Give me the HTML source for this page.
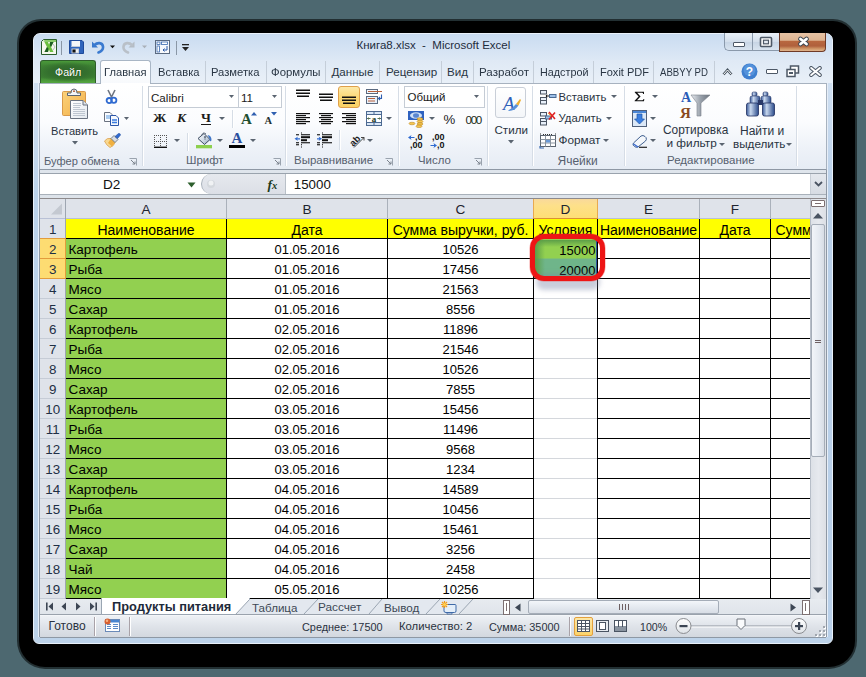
<!DOCTYPE html>
<html><head><meta charset="utf-8"><style>
*{margin:0;padding:0;box-sizing:border-box}
html,body{width:866px;height:677px;overflow:hidden;background:#4d6870;font-family:"Liberation Sans",sans-serif}
body>div,#w div{position:absolute}
.t{white-space:nowrap;line-height:1}
</style></head><body>
<div style="left:19px;top:21px;width:836px;height:646px;background:#000;border-radius:22px 22px 26px 26px;box-shadow:0 0 0 2px rgba(0,0,0,.55)"></div><div style="left:33px;top:33px;width:800px;height:611px;background:linear-gradient(#dfe9f5,#d5e2f1 40%,#c9dbef);border-radius:7px 7px 6px 6px;border:1px solid #e9f1fa"></div><div style="left:34px;top:83px;width:5px;height:557px;background:linear-gradient(#cfdff1,#bcd3ea 20%,#bcd3ea);border-right:1px solid #e6eef8"></div><div style="left:827px;top:83px;width:5px;height:557px;background:linear-gradient(#cfdff1,#b9d0e9 20%,#b9d0e9);border-left:1px solid #e6eef8"></div><div style="left:34px;top:637px;width:798px;height:6px;background:#bdd3ea;border-radius:0 0 5px 5px"></div><div style="left:34px;top:34px;width:798px;height:26px;background:linear-gradient(#c9dbf0,#d3e2f3 50%,#dde8f5);border-radius:6px 6px 0 0"></div><svg style="position:absolute;left:41px;top:39px" width="16" height="16" viewBox="0 0 16 16">
<path d="M2.5 0.5 H15.5 V15.5 H0.5 V2.5Z" fill="#f6f8ee" stroke="#2a5e2a"/>
<path d="M2 2 L4 1 H15 V3 H4Z" fill="#6fbf4a" opacity=".8"/>
<path d="M3.5 3 H7 L8 5.5 L9 3 H12.5 L10 8 L12.5 13 H9 L8 10.5 L7 13 H3.5 L6 8Z" fill="#6cc03e"/>
<path d="M3.5 13 L6 8 L7.5 9.5 L7 13Z M9 3 H12.5 L10 8 L9 6.5Z" fill="#1e5e22"/>
<path d="M12 5 L14 8 L12 11" stroke="#b8c0c0" stroke-width="1" fill="none"/>
</svg><div style="left:61px;top:41px;width:1px;height:14px;background:#8a97a6"></div><svg style="position:absolute;left:69px;top:40px" width="15" height="14" viewBox="0 0 15 14">
<path d="M0.5 0.5 H13 L14.5 2 V13.5 H0.5Z" fill="#2f64bc" stroke="#1f4a9a"/>
<rect x="2.5" y="1" width="8.5" height="6" fill="#f4f6f9"/><rect x="2.5" y="6" width="8.5" height="1" fill="#c0cad8"/>
<rect x="2.5" y="8.5" width="7.5" height="5" fill="#c9ced6"/>
<rect x="3.5" y="9.5" width="3" height="3" fill="#111"/><rect x="7" y="9.5" width="2" height="3" fill="#f0f2f4"/>
</svg><svg style="position:absolute;left:90px;top:40px" width="28" height="14" viewBox="0 0 28 14">
<path d="M2 1.5 L2 7.5 L8 7.5Z" fill="#3a78cc"/>
<path d="M4.5 5 C7 2.5 12.5 2 13 6.5 C13.4 9.5 11 11.5 8.5 12.5" fill="none" stroke="#3a7ad0" stroke-width="2.6" stroke-linecap="round"/>
<path d="M20 5.5 H25 L22.5 8.2Z" fill="#111"/>
</svg><svg style="position:absolute;left:122px;top:40px" width="28" height="14" viewBox="0 0 28 14">
<path d="M12.5 1.5 L12.5 7.5 L6.5 7.5Z" fill="#b4bcc4"/>
<path d="M10 5 C7.5 2.5 2 2 1.5 6.5 C1.1 9.5 3.5 11.5 6 12.5" fill="none" stroke="#b9c0c8" stroke-width="2.6" stroke-linecap="round"/>
<path d="M20 5.5 H25 L22.5 8.2Z" fill="#a9b0b8"/>
</svg><svg style="position:absolute;left:155px;top:40px" width="15" height="14" viewBox="0 0 15 14">
<rect x="0.5" y="0.5" width="14" height="13" fill="#f7f9fc" stroke="#5a6a80"/>
<rect x="2" y="2" width="3" height="2.5" fill="#fff" stroke="#3a6ab0" stroke-width="0.8"/><rect x="6.5" y="2" width="6" height="2.5" fill="#fff" stroke="#3a6ab0" stroke-width="0.8"/>
<rect x="2" y="6" width="2.5" height="6" fill="#fff" stroke="#3a6ab0" stroke-width="0.8"/>
<path d="M12 6 V10 H8 M9.5 8.5 L8 10 L9.5 11.5" stroke="#2a5aa8" stroke-width="1" fill="none"/></svg><div style="left:176px;top:41px;width:1px;height:14px;background:#8a97a6"></div><svg style="position:absolute;left:181px;top:44px" width="9" height="8" viewBox="0 0 9 8">
<rect x="1" y="0" width="7" height="1.3" fill="#222"/><path d="M1 3 L8 3 L4.5 7Z" fill="#222"/></svg><div class="t" style="left:356.5px;top:39.97px;font-size:11.5px;color:#1e2c3c;font-weight:normal;">Книга8.xlsx&nbsp; - &nbsp;Microsoft Excel</div><div style="left:724px;top:33px;width:28px;height:18px;background:linear-gradient(#eaf1f9,#d4dfec 50%,#c6d4e4 51%,#d9e4f0);border:1px solid #8a99ab;border-top:none;border-right:none;border-radius:0 0 0 5px"></div><div style="left:752px;top:33px;width:27px;height:18px;background:linear-gradient(#eaf1f9,#d4dfec 50%,#c6d4e4 51%,#d9e4f0);border:1px solid #8a99ab;border-top:none;border-right:none"></div><div style="left:779px;top:33px;width:47px;height:19px;background:linear-gradient(#e6c2a4,#deb592 40%,#b8673f 47%,#b0603c 72%,#d09868 88%,#dfb48e);border:1px solid #6e3a26;border-top:none;border-radius:0 0 4px 0"></div><div style="left:733px;top:42px;width:12px;height:5px;background:#fff;border:1px solid #4d5866;border-radius:1px"></div><svg style="position:absolute;left:759px;top:36px" width="14" height="12" viewBox="0 0 14 12"><rect x="1.5" y="1.5" width="11" height="9" rx="1" fill="#fff" stroke="#4d5866" stroke-width="1.6"/><rect x="4.5" y="4.2" width="5" height="3.6" fill="#e4eaf2" stroke="#4d5866" stroke-width="1.2"/></svg><svg style="position:absolute;left:796px;top:35px" width="16" height="13" viewBox="0 0 16 13">
<path d="M4.5 4 L10.5 9 M10.5 4 L4.5 9" stroke="#3d4650" stroke-width="4.8" stroke-linecap="round"/>
<path d="M4.5 4 L10.5 9 M10.5 4 L4.5 9" stroke="#fff" stroke-width="2.8" stroke-linecap="round"/>
</svg><div style="left:34px;top:60px;width:798px;height:23px;background:linear-gradient(#dfe9f5,#e9f0f8)"></div><div style="left:40px;top:60px;width:56px;height:24px;background:radial-gradient(ellipse 60% 45% at 50% 48%,#2f672b,#34702e 60%,rgba(60,130,50,0) 100%),linear-gradient(#4a9a3a,#3f8434 20%,#3c7f32 70%,#4f9f3c 88%,#58a844);border:1px solid #2e5e2a;border-bottom:none;border-radius:3px 3px 0 0"></div><div class="t" style="left:55px;top:66.54px;font-size:10.7px;color:#fff;font-weight:normal;text-shadow:0 0 1px #1a4a10">Файл</div><div style="left:100px;top:60px;width:51px;height:25px;background:linear-gradient(#ffffff,#f7f9fc);border:1px solid #a9b6c5;border-bottom:none;border-radius:3px 3px 0 0"></div><div class="t" style="left:104px;top:66.18px;font-size:11.6px;color:#2a3644;transform:scaleX(0.963);transform-origin:0 0">Главная</div><div class="t" style="left:157.5px;top:66.18px;font-size:11.6px;color:#2a3644;transform:scaleX(0.963);transform-origin:0 0">Вставка</div><div class="t" style="left:210.5px;top:66.18px;font-size:11.6px;color:#2a3644;transform:scaleX(0.968);transform-origin:0 0">Разметка</div><div class="t" style="left:271px;top:66.18px;font-size:11.6px;color:#2a3644;transform:scaleX(0.981);transform-origin:0 0">Формулы</div><div class="t" style="left:331.5px;top:66.18px;font-size:11.6px;color:#2a3644;transform:scaleX(1.000);transform-origin:0 0">Данные</div><div class="t" style="left:386px;top:66.18px;font-size:11.6px;color:#2a3644;transform:scaleX(1.000);transform-origin:0 0">Рецензир</div><div class="t" style="left:447px;top:66.18px;font-size:11.6px;color:#2a3644;transform:scaleX(1.000);transform-origin:0 0">Вид</div><div class="t" style="left:478.5px;top:66.18px;font-size:11.6px;color:#2a3644;transform:scaleX(0.999);transform-origin:0 0">Разработ</div><div class="t" style="left:540px;top:66.18px;font-size:11.6px;color:#2a3644;transform:scaleX(0.931);transform-origin:0 0">Надстрой</div><div class="t" style="left:600px;top:66.18px;font-size:11.6px;color:#2a3644;transform:scaleX(0.951);transform-origin:0 0">Foxit PDF</div><div class="t" style="left:660px;top:66.18px;font-size:11.6px;color:#2a3644;transform:scaleX(0.830);transform-origin:0 0">ABBYY PD</div><div style="left:205px;top:61px;width:1px;height:22px;background:#c5ced9"></div><div style="left:266px;top:61px;width:1px;height:22px;background:#c5ced9"></div><div style="left:325px;top:61px;width:1px;height:22px;background:#c5ced9"></div><div style="left:379px;top:61px;width:1px;height:22px;background:#c5ced9"></div><div style="left:441px;top:61px;width:1px;height:22px;background:#c5ced9"></div><div style="left:473px;top:61px;width:1px;height:22px;background:#c5ced9"></div><div style="left:533px;top:61px;width:1px;height:22px;background:#c5ced9"></div><div style="left:593px;top:61px;width:1px;height:22px;background:#c5ced9"></div><div style="left:653px;top:61px;width:1px;height:22px;background:#c5ced9"></div><div style="left:714px;top:61px;width:1px;height:22px;background:#c5ced9"></div><svg style="position:absolute;left:722px;top:68px" width="11" height="8" viewBox="0 0 11 8">
<path d="M1.5 6.5 L5.5 2 L9.5 6.5" stroke="#46525e" stroke-width="2.6" fill="none"/><path d="M1.5 6.5 L5.5 2 L9.5 6.5" stroke="#fff" stroke-width="1" fill="none"/></svg><svg style="position:absolute;left:741px;top:63px" width="17" height="17" viewBox="0 0 17 17">
<circle cx="8.5" cy="8.5" r="8" fill="#3f7fcf"/><circle cx="8.5" cy="7" r="6" fill="#6aa6e8" opacity=".5"/>
<text x="8.5" y="13" font-family="Liberation Sans" font-size="12" font-weight="bold" fill="#fff" text-anchor="middle">?</text></svg><div style="left:766px;top:69px;width:12px;height:5px;background:#fff;border:1.5px solid #4d5866;border-radius:1px"></div><svg style="position:absolute;left:786px;top:65px" width="14" height="13" viewBox="0 0 14 13">
<rect x="4.5" y="1" width="8" height="7" fill="#fff" stroke="#4d5866" stroke-width="1.5"/>
<rect x="1" y="4.5" width="8" height="7" fill="#fff" stroke="#4d5866" stroke-width="1.5"/>
<rect x="3" y="7" width="4" height="2" fill="#4d5866"/></svg><svg style="position:absolute;left:809px;top:66px" width="13" height="11" viewBox="0 0 13 11">
<path d="M2.2 2 L10.8 9 M10.8 2 L2.2 9" stroke="#4d5866" stroke-width="4" stroke-linecap="round"/>
<path d="M2.2 2 L10.8 9 M10.8 2 L2.2 9" stroke="#fff" stroke-width="2" stroke-linecap="round"/></svg><div style="left:39px;top:83px;width:788px;height:87px;background:linear-gradient(#ffffff 0%,#fbfcfe 45%,#eef2f8 75%,#e6ecf4 100%);border:1px solid #a7b2bf;border-bottom:1px solid #8e98a4"></div><div style="left:101px;top:83px;width:49px;height:2px;background:#fff"></div><div style="left:142px;top:86px;width:1px;height:80px;background:#d6dde6;box-shadow:1px 0 0 #fff"></div><div style="left:285px;top:86px;width:1px;height:80px;background:#d6dde6;box-shadow:1px 0 0 #fff"></div><div style="left:398px;top:86px;width:1px;height:80px;background:#d6dde6;box-shadow:1px 0 0 #fff"></div><div style="left:487px;top:86px;width:1px;height:80px;background:#d6dde6;box-shadow:1px 0 0 #fff"></div><div style="left:532px;top:86px;width:1px;height:80px;background:#d6dde6;box-shadow:1px 0 0 #fff"></div><div style="left:624px;top:86px;width:1px;height:80px;background:#d6dde6;box-shadow:1px 0 0 #fff"></div><div style="left:796px;top:86px;width:1px;height:80px;background:#d6dde6;box-shadow:1px 0 0 #fff"></div><div class="t" style="left:44px;top:155.60px;font-size:11.1px;color:#56606e;font-weight:normal;">Буфер обмена</div><div class="t" style="left:186px;top:155.35px;font-size:11.4px;color:#56606e;font-weight:normal;">Шрифт</div><div class="t" style="left:294px;top:155.27px;font-size:11.5px;color:#56606e;font-weight:normal;">Выравнивание</div><div class="t" style="left:418px;top:155.35px;font-size:11.4px;color:#56606e;font-weight:normal;">Число</div><div class="t" style="left:557.5px;top:154.84px;font-size:12px;color:#56606e;font-weight:normal;">Ячейки</div><div class="t" style="left:667px;top:155.27px;font-size:11.5px;color:#56606e;font-weight:normal;">Редактирование</div><div style="left:39px;top:170px;width:788px;height:29px;background:linear-gradient(#dfe5ec,#dde3ea)"></div><div style="left:40px;top:173px;width:786px;height:22px;background:#fff;border-top:1px solid #9aa3ad;border-bottom:1px solid #a9b1ba"></div><svg style="position:absolute;left:187px;top:182px" width="9" height="6" viewBox="0 0 9 6"><path d="M0.5 0.5 L8.5 0.5 L4.5 5.5Z" fill="#2d5f2d"/></svg><div class="t" style="left:103px;top:177.99px;font-size:13.6px;color:#111;font-weight:normal;">D2</div><div style="left:201px;top:174px;width:85px;height:20px;background:linear-gradient(#e6e9ee,#dcdfe6);border-left:1px solid #a9b1bb;border-radius:10px 0 0 10px;border-right:1px solid #b9c0c8"></div><svg style="position:absolute;left:206px;top:179px" width="10" height="10" viewBox="0 0 10 10"><circle cx="5" cy="5" r="4" fill="#d4d8dd"/><circle cx="5" cy="4" r="2.5" fill="#f0f2f4"/></svg><div class="t" style="left:267.5px;top:177.57px;font-size:13.5px;color:#203a20;font-weight:bold;font-family:'Liberation Serif'"><i>f</i><span style='font-size:10.5px'><i>x</i></span></div><div class="t" style="left:293.8px;top:178.24px;font-size:13.3px;color:#111;font-weight:normal;">15000</div><div style="left:810px;top:174px;width:16px;height:20px;background:linear-gradient(#e4e8ee,#d7dce3);border-left:1px solid #c8ced6"></div><svg style="position:absolute;left:814px;top:181px" width="9" height="6" viewBox="0 0 9 6"><path d="M1 1 L4.5 4.5 L8 1" stroke="#4a5462" stroke-width="1.8" fill="none"/></svg><div style="left:40px;top:198px;width:786px;height:1px;background:#8e8a8c"></div><div style="left:40px;top:199px;width:770px;height:19px;background:#dfe3ea"></div><div style="left:40px;top:218px;width:770px;height:1px;background:#b9c1d6"></div><div style="left:40px;top:219px;width:25px;height:380px;background:#dfe3ea"></div><div style="left:65px;top:199px;width:1px;height:400px;background:#9ea6b1"></div><div style="left:226px;top:199px;width:1px;height:19px;background:#aab1bb"></div><div class="t" style="left:66px;top:203.09px;font-size:13.6px;color:#1e2430;font-weight:normal;width:160px;text-align:center;">A</div><div style="left:387px;top:199px;width:1px;height:19px;background:#aab1bb"></div><div class="t" style="left:227px;top:203.09px;font-size:13.6px;color:#1e2430;font-weight:normal;width:160px;text-align:center;">B</div><div style="left:533px;top:199px;width:1px;height:19px;background:#aab1bb"></div><div class="t" style="left:388px;top:203.09px;font-size:13.6px;color:#1e2430;font-weight:normal;width:145px;text-align:center;">C</div><div style="left:597px;top:199px;width:1px;height:19px;background:#aab1bb"></div><div class="t" style="left:534px;top:203.09px;font-size:13.6px;color:#1e2430;font-weight:normal;width:63px;text-align:center;">D</div><div style="left:699px;top:199px;width:1px;height:19px;background:#aab1bb"></div><div class="t" style="left:598px;top:203.09px;font-size:13.6px;color:#1e2430;font-weight:normal;width:101px;text-align:center;">E</div><div style="left:770px;top:199px;width:1px;height:19px;background:#aab1bb"></div><div class="t" style="left:700px;top:203.09px;font-size:13.6px;color:#1e2430;font-weight:normal;width:70px;text-align:center;">F</div><div style="left:533px;top:199px;width:65px;height:20px;background:linear-gradient(#f9d99b,#fde08a 35%,#fedf75);border-left:1px solid #e9a94f;border-right:1px solid #e9a94f;border-bottom:1px solid #d9903a"></div><div class="t" style="left:534px;top:203.09px;font-size:13.6px;color:#1e2430;font-weight:normal;width:63px;text-align:center;">D</div><div style="left:40px;top:238px;width:25px;height:1px;background:#e39c3c"></div><div class="t" style="left:40px;top:223.46px;font-size:13.4px;color:#1e2f45;font-weight:normal;width:25.5px;text-align:center;">1</div><div style="left:40px;top:238px;width:26px;height:21px;background:#fddc72;border:1px solid #e39c3c;border-left:none"></div><div class="t" style="left:40px;top:243.46px;font-size:13.4px;color:#1e2f45;font-weight:normal;width:25.5px;text-align:center;">2</div><div style="left:40px;top:258px;width:26px;height:21px;background:#fddc72;border:1px solid #e39c3c;border-left:none"></div><div class="t" style="left:40px;top:263.46px;font-size:13.4px;color:#1e2f45;font-weight:normal;width:25.5px;text-align:center;">3</div><div style="left:40px;top:298px;width:25px;height:1px;background:#c6ccd6"></div><div class="t" style="left:40px;top:283.46px;font-size:13.4px;color:#1e2f45;font-weight:normal;width:25.5px;text-align:center;">4</div><div style="left:40px;top:318px;width:25px;height:1px;background:#c6ccd6"></div><div class="t" style="left:40px;top:303.46px;font-size:13.4px;color:#1e2f45;font-weight:normal;width:25.5px;text-align:center;">5</div><div style="left:40px;top:338px;width:25px;height:1px;background:#c6ccd6"></div><div class="t" style="left:40px;top:323.46px;font-size:13.4px;color:#1e2f45;font-weight:normal;width:25.5px;text-align:center;">6</div><div style="left:40px;top:358px;width:25px;height:1px;background:#c6ccd6"></div><div class="t" style="left:40px;top:343.46px;font-size:13.4px;color:#1e2f45;font-weight:normal;width:25.5px;text-align:center;">7</div><div style="left:40px;top:378px;width:25px;height:1px;background:#c6ccd6"></div><div class="t" style="left:40px;top:363.46px;font-size:13.4px;color:#1e2f45;font-weight:normal;width:25.5px;text-align:center;">8</div><div style="left:40px;top:398px;width:25px;height:1px;background:#c6ccd6"></div><div class="t" style="left:40px;top:383.46px;font-size:13.4px;color:#1e2f45;font-weight:normal;width:25.5px;text-align:center;">9</div><div style="left:40px;top:418px;width:25px;height:1px;background:#c6ccd6"></div><div class="t" style="left:40px;top:403.46px;font-size:13.4px;color:#1e2f45;font-weight:normal;width:25.5px;text-align:center;">10</div><div style="left:40px;top:438px;width:25px;height:1px;background:#c6ccd6"></div><div class="t" style="left:40px;top:423.46px;font-size:13.4px;color:#1e2f45;font-weight:normal;width:25.5px;text-align:center;">11</div><div style="left:40px;top:458px;width:25px;height:1px;background:#c6ccd6"></div><div class="t" style="left:40px;top:443.46px;font-size:13.4px;color:#1e2f45;font-weight:normal;width:25.5px;text-align:center;">12</div><div style="left:40px;top:478px;width:25px;height:1px;background:#c6ccd6"></div><div class="t" style="left:40px;top:463.46px;font-size:13.4px;color:#1e2f45;font-weight:normal;width:25.5px;text-align:center;">13</div><div style="left:40px;top:498px;width:25px;height:1px;background:#c6ccd6"></div><div class="t" style="left:40px;top:483.46px;font-size:13.4px;color:#1e2f45;font-weight:normal;width:25.5px;text-align:center;">14</div><div style="left:40px;top:518px;width:25px;height:1px;background:#c6ccd6"></div><div class="t" style="left:40px;top:503.46px;font-size:13.4px;color:#1e2f45;font-weight:normal;width:25.5px;text-align:center;">15</div><div style="left:40px;top:538px;width:25px;height:1px;background:#c6ccd6"></div><div class="t" style="left:40px;top:523.46px;font-size:13.4px;color:#1e2f45;font-weight:normal;width:25.5px;text-align:center;">16</div><div style="left:40px;top:558px;width:25px;height:1px;background:#c6ccd6"></div><div class="t" style="left:40px;top:543.46px;font-size:13.4px;color:#1e2f45;font-weight:normal;width:25.5px;text-align:center;">17</div><div style="left:40px;top:578px;width:25px;height:1px;background:#c6ccd6"></div><div class="t" style="left:40px;top:563.46px;font-size:13.4px;color:#1e2f45;font-weight:normal;width:25.5px;text-align:center;">18</div><div style="left:40px;top:598px;width:25px;height:1px;background:#c6ccd6"></div><div class="t" style="left:40px;top:583.46px;font-size:13.4px;color:#1e2f45;font-weight:normal;width:25.5px;text-align:center;">19</div><div style="left:66px;top:219px;width:744px;height:380px;background:#fff"></div><div style="left:66px;top:219px;width:744px;height:20px;background:#ffff00"></div><div style="left:66px;top:239px;width:160px;height:360px;background:#92d050"></div><div style="left:534px;top:298px;width:63px;height:1px;background:#d4d7dc"></div><div style="left:534px;top:318px;width:63px;height:1px;background:#d4d7dc"></div><div style="left:534px;top:338px;width:63px;height:1px;background:#d4d7dc"></div><div style="left:534px;top:358px;width:63px;height:1px;background:#d4d7dc"></div><div style="left:534px;top:378px;width:63px;height:1px;background:#d4d7dc"></div><div style="left:534px;top:398px;width:63px;height:1px;background:#d4d7dc"></div><div style="left:534px;top:418px;width:63px;height:1px;background:#d4d7dc"></div><div style="left:534px;top:438px;width:63px;height:1px;background:#d4d7dc"></div><div style="left:534px;top:458px;width:63px;height:1px;background:#d4d7dc"></div><div style="left:534px;top:478px;width:63px;height:1px;background:#d4d7dc"></div><div style="left:534px;top:498px;width:63px;height:1px;background:#d4d7dc"></div><div style="left:534px;top:518px;width:63px;height:1px;background:#d4d7dc"></div><div style="left:534px;top:538px;width:63px;height:1px;background:#d4d7dc"></div><div style="left:534px;top:558px;width:63px;height:1px;background:#d4d7dc"></div><div style="left:534px;top:578px;width:63px;height:1px;background:#d4d7dc"></div><div style="left:534px;top:598px;width:63px;height:1px;background:#d4d7dc"></div><div style="left:66px;top:238px;width:744px;height:1px;background:#000"></div><div style="left:66px;top:258px;width:744px;height:1px;background:#000"></div><div style="left:66px;top:278px;width:744px;height:1px;background:#000"></div><div style="left:66px;top:298px;width:467px;height:1px;background:#000"></div><div style="left:597px;top:298px;width:213px;height:1px;background:#000"></div><div style="left:66px;top:318px;width:467px;height:1px;background:#000"></div><div style="left:597px;top:318px;width:213px;height:1px;background:#000"></div><div style="left:66px;top:338px;width:467px;height:1px;background:#000"></div><div style="left:597px;top:338px;width:213px;height:1px;background:#000"></div><div style="left:66px;top:358px;width:467px;height:1px;background:#000"></div><div style="left:597px;top:358px;width:213px;height:1px;background:#000"></div><div style="left:66px;top:378px;width:467px;height:1px;background:#000"></div><div style="left:597px;top:378px;width:213px;height:1px;background:#000"></div><div style="left:66px;top:398px;width:467px;height:1px;background:#000"></div><div style="left:597px;top:398px;width:213px;height:1px;background:#000"></div><div style="left:66px;top:418px;width:467px;height:1px;background:#000"></div><div style="left:597px;top:418px;width:213px;height:1px;background:#000"></div><div style="left:66px;top:438px;width:467px;height:1px;background:#000"></div><div style="left:597px;top:438px;width:213px;height:1px;background:#000"></div><div style="left:66px;top:458px;width:467px;height:1px;background:#000"></div><div style="left:597px;top:458px;width:213px;height:1px;background:#000"></div><div style="left:66px;top:478px;width:467px;height:1px;background:#000"></div><div style="left:597px;top:478px;width:213px;height:1px;background:#000"></div><div style="left:66px;top:498px;width:467px;height:1px;background:#000"></div><div style="left:597px;top:498px;width:213px;height:1px;background:#000"></div><div style="left:66px;top:518px;width:467px;height:1px;background:#000"></div><div style="left:597px;top:518px;width:213px;height:1px;background:#000"></div><div style="left:66px;top:538px;width:467px;height:1px;background:#000"></div><div style="left:597px;top:538px;width:213px;height:1px;background:#000"></div><div style="left:66px;top:558px;width:467px;height:1px;background:#000"></div><div style="left:597px;top:558px;width:213px;height:1px;background:#000"></div><div style="left:66px;top:578px;width:467px;height:1px;background:#000"></div><div style="left:597px;top:578px;width:213px;height:1px;background:#000"></div><div style="left:66px;top:598px;width:467px;height:1px;background:#000"></div><div style="left:597px;top:598px;width:213px;height:1px;background:#000"></div><div style="left:226px;top:219px;width:1px;height:380px;background:#000"></div><div style="left:387px;top:219px;width:1px;height:380px;background:#000"></div><div style="left:533px;top:219px;width:1px;height:380px;background:#000"></div><div style="left:597px;top:219px;width:1px;height:380px;background:#000"></div><div style="left:699px;top:219px;width:1px;height:380px;background:#000"></div><div style="left:770px;top:219px;width:1px;height:380px;background:#000"></div><div class="t" style="left:66px;top:222.65px;font-size:14px;color:#000;font-weight:normal;width:160px;text-align:center;">Наименование</div><div class="t" style="left:227px;top:222.65px;font-size:14px;color:#000;font-weight:normal;width:160px;text-align:center;">Дата</div><div class="t" style="left:388px;top:222.65px;font-size:14px;color:#000;font-weight:normal;width:145px;text-align:center;">Сумма выручки, руб.</div><div class="t" style="left:534px;top:222.65px;font-size:14px;color:#000;font-weight:normal;width:63px;text-align:center;">Условия</div><div class="t" style="left:598px;top:222.65px;font-size:14px;color:#000;font-weight:normal;width:101px;text-align:center;">Наименование</div><div class="t" style="left:700px;top:222.65px;font-size:14px;color:#000;font-weight:normal;width:70px;text-align:center;">Дата</div><div class="t" style="left:775.5px;top:222.65px;font-size:14px;color:#000;font-weight:normal;">Сумм</div><div class="t" style="left:68.5px;top:243.07px;font-size:13.5px;color:#000;font-weight:normal;">Картофель</div><div class="t" style="left:227px;top:243.00px;font-size:13.0px;color:#000;font-weight:normal;width:160px;text-align:center;">01.05.2016</div><div class="t" style="left:388px;top:243.00px;font-size:13.0px;color:#000;font-weight:normal;width:145px;text-align:center;">10526</div><div class="t" style="left:68.5px;top:263.07px;font-size:13.5px;color:#000;font-weight:normal;">Рыба</div><div class="t" style="left:227px;top:263.00px;font-size:13.0px;color:#000;font-weight:normal;width:160px;text-align:center;">01.05.2016</div><div class="t" style="left:388px;top:263.00px;font-size:13.0px;color:#000;font-weight:normal;width:145px;text-align:center;">17456</div><div class="t" style="left:68.5px;top:283.07px;font-size:13.5px;color:#000;font-weight:normal;">Мясо</div><div class="t" style="left:227px;top:283.00px;font-size:13.0px;color:#000;font-weight:normal;width:160px;text-align:center;">01.05.2016</div><div class="t" style="left:388px;top:283.00px;font-size:13.0px;color:#000;font-weight:normal;width:145px;text-align:center;">21563</div><div class="t" style="left:68.5px;top:303.07px;font-size:13.5px;color:#000;font-weight:normal;">Сахар</div><div class="t" style="left:227px;top:303.00px;font-size:13.0px;color:#000;font-weight:normal;width:160px;text-align:center;">01.05.2016</div><div class="t" style="left:388px;top:303.00px;font-size:13.0px;color:#000;font-weight:normal;width:145px;text-align:center;">8556</div><div class="t" style="left:68.5px;top:323.07px;font-size:13.5px;color:#000;font-weight:normal;">Картофель</div><div class="t" style="left:227px;top:323.00px;font-size:13.0px;color:#000;font-weight:normal;width:160px;text-align:center;">02.05.2016</div><div class="t" style="left:388px;top:323.00px;font-size:13.0px;color:#000;font-weight:normal;width:145px;text-align:center;">11896</div><div class="t" style="left:68.5px;top:343.07px;font-size:13.5px;color:#000;font-weight:normal;">Рыба</div><div class="t" style="left:227px;top:343.00px;font-size:13.0px;color:#000;font-weight:normal;width:160px;text-align:center;">02.05.2016</div><div class="t" style="left:388px;top:343.00px;font-size:13.0px;color:#000;font-weight:normal;width:145px;text-align:center;">21546</div><div class="t" style="left:68.5px;top:363.07px;font-size:13.5px;color:#000;font-weight:normal;">Мясо</div><div class="t" style="left:227px;top:363.00px;font-size:13.0px;color:#000;font-weight:normal;width:160px;text-align:center;">02.05.2016</div><div class="t" style="left:388px;top:363.00px;font-size:13.0px;color:#000;font-weight:normal;width:145px;text-align:center;">10526</div><div class="t" style="left:68.5px;top:383.07px;font-size:13.5px;color:#000;font-weight:normal;">Сахар</div><div class="t" style="left:227px;top:383.00px;font-size:13.0px;color:#000;font-weight:normal;width:160px;text-align:center;">02.05.2016</div><div class="t" style="left:388px;top:383.00px;font-size:13.0px;color:#000;font-weight:normal;width:145px;text-align:center;">7855</div><div class="t" style="left:68.5px;top:403.07px;font-size:13.5px;color:#000;font-weight:normal;">Картофель</div><div class="t" style="left:227px;top:403.00px;font-size:13.0px;color:#000;font-weight:normal;width:160px;text-align:center;">03.05.2016</div><div class="t" style="left:388px;top:403.00px;font-size:13.0px;color:#000;font-weight:normal;width:145px;text-align:center;">15456</div><div class="t" style="left:68.5px;top:423.07px;font-size:13.5px;color:#000;font-weight:normal;">Рыба</div><div class="t" style="left:227px;top:423.00px;font-size:13.0px;color:#000;font-weight:normal;width:160px;text-align:center;">03.05.2016</div><div class="t" style="left:388px;top:423.00px;font-size:13.0px;color:#000;font-weight:normal;width:145px;text-align:center;">11496</div><div class="t" style="left:68.5px;top:443.07px;font-size:13.5px;color:#000;font-weight:normal;">Мясо</div><div class="t" style="left:227px;top:443.00px;font-size:13.0px;color:#000;font-weight:normal;width:160px;text-align:center;">03.05.2016</div><div class="t" style="left:388px;top:443.00px;font-size:13.0px;color:#000;font-weight:normal;width:145px;text-align:center;">9568</div><div class="t" style="left:68.5px;top:463.07px;font-size:13.5px;color:#000;font-weight:normal;">Сахар</div><div class="t" style="left:227px;top:463.00px;font-size:13.0px;color:#000;font-weight:normal;width:160px;text-align:center;">03.05.2016</div><div class="t" style="left:388px;top:463.00px;font-size:13.0px;color:#000;font-weight:normal;width:145px;text-align:center;">1234</div><div class="t" style="left:68.5px;top:483.07px;font-size:13.5px;color:#000;font-weight:normal;">Картофель</div><div class="t" style="left:227px;top:483.00px;font-size:13.0px;color:#000;font-weight:normal;width:160px;text-align:center;">04.05.2016</div><div class="t" style="left:388px;top:483.00px;font-size:13.0px;color:#000;font-weight:normal;width:145px;text-align:center;">14589</div><div class="t" style="left:68.5px;top:503.07px;font-size:13.5px;color:#000;font-weight:normal;">Рыба</div><div class="t" style="left:227px;top:503.00px;font-size:13.0px;color:#000;font-weight:normal;width:160px;text-align:center;">04.05.2016</div><div class="t" style="left:388px;top:503.00px;font-size:13.0px;color:#000;font-weight:normal;width:145px;text-align:center;">10456</div><div class="t" style="left:68.5px;top:523.07px;font-size:13.5px;color:#000;font-weight:normal;">Мясо</div><div class="t" style="left:227px;top:523.00px;font-size:13.0px;color:#000;font-weight:normal;width:160px;text-align:center;">04.05.2016</div><div class="t" style="left:388px;top:523.00px;font-size:13.0px;color:#000;font-weight:normal;width:145px;text-align:center;">15461</div><div class="t" style="left:68.5px;top:543.07px;font-size:13.5px;color:#000;font-weight:normal;">Сахар</div><div class="t" style="left:227px;top:543.00px;font-size:13.0px;color:#000;font-weight:normal;width:160px;text-align:center;">04.05.2016</div><div class="t" style="left:388px;top:543.00px;font-size:13.0px;color:#000;font-weight:normal;width:145px;text-align:center;">3256</div><div class="t" style="left:68.5px;top:563.07px;font-size:13.5px;color:#000;font-weight:normal;">Чай</div><div class="t" style="left:227px;top:563.00px;font-size:13.0px;color:#000;font-weight:normal;width:160px;text-align:center;">04.05.2016</div><div class="t" style="left:388px;top:563.00px;font-size:13.0px;color:#000;font-weight:normal;width:145px;text-align:center;">2458</div><div class="t" style="left:68.5px;top:583.07px;font-size:13.5px;color:#000;font-weight:normal;">Мясо</div><div class="t" style="left:227px;top:583.00px;font-size:13.0px;color:#000;font-weight:normal;width:160px;text-align:center;">05.05.2016</div><div class="t" style="left:388px;top:583.00px;font-size:13.0px;color:#000;font-weight:normal;width:145px;text-align:center;">10256</div><div style="left:534px;top:239px;width:63px;height:19px;background:#92d050"></div><div style="left:534px;top:259px;width:63px;height:19px;background:#6fb58a"></div><div style="left:534px;top:258px;width:63px;height:1px;background:#82c46c"></div><div style="left:535px;top:240px;width:10px;height:38px;background:linear-gradient(90deg,#5c9e48,rgba(92,158,72,0))"></div><div style="left:535px;top:240px;width:61px;height:7px;background:linear-gradient(#5c9e48,rgba(92,158,72,0))"></div><div class="t" style="left:534px;top:243.50px;font-size:13.0px;color:#000;font-weight:normal;width:61.5px;text-align:right;">15000</div><div class="t" style="left:534px;top:263.50px;font-size:13.0px;color:#000;font-weight:normal;width:61.5px;text-align:right;">20000</div><div style="left:596px;top:240px;width:1px;height:38px;background:#3055a0"></div><div style="left:536px;top:274px;width:64px;height:16px;background:rgba(120,130,165,.4);filter:blur(2.5px);border-radius:8px"></div><div style="left:530px;top:234px;width:75px;height:47px;border:5px solid #ee1515;border-radius:14px;box-shadow:0 0 0 0.5px rgba(238,60,60,.5)"></div><div style="left:810px;top:199px;width:16px;height:400px;background:linear-gradient(90deg,#dde1e7,#e6e9ee 50%,#dcdfe5);border-left:1px solid #b7bec8"></div><div style="left:811px;top:200px;width:14px;height:7px;background:#fff;border:1.5px solid #7d7072;border-radius:1px"></div><div style="left:815px;top:203px;width:6px;height:1px;background:#7d7072"></div><svg style="position:absolute;left:812px;top:212px" width="12" height="7" viewBox="0 0 12 7"><path d="M1 6.5 L6 1 L11 6.5Z" fill="#4a5462"/></svg><div style="left:811px;top:224px;width:14px;height:233px;background:linear-gradient(90deg,#f2f5f9,#e4e9f0 60%,#d8dde5);border:1px solid #a5adb8;border-radius:2px"></div><div style="left:815px;top:340px;width:6px;height:1px;background:#6e6062"></div><div style="left:815px;top:342px;width:6px;height:1px;background:#6e6062"></div><svg style="position:absolute;left:812px;top:587px" width="12" height="7" viewBox="0 0 12 7"><path d="M1 0.5 L11 0.5 L6 6Z" fill="#4a5462"/></svg><div style="left:826px;top:170px;width:1px;height:467px;background:#8e98a4"></div><div style="left:39px;top:170px;width:1px;height:467px;background:#8e98a4"></div><div style="left:40px;top:599px;width:786px;height:16px;background:linear-gradient(#e7ebf0,#dfe4ea)"></div><div style="left:40px;top:614px;width:786px;height:1px;background:#9aa2ac"></div><svg style="position:absolute;left:45px;top:602px" width="10" height="9" viewBox="0 0 10 9"><rect x="1" y="0.5" width="1.6" height="8" fill="#3d4654"/><path d="M8 0.5 L3.5 4.5 L8 8.5Z" fill="#3d4654"/></svg><svg style="position:absolute;left:60px;top:602px" width="8" height="9" viewBox="0 0 8 9"><path d="M6 0.5 L1.5 4.5 L6 8.5Z" fill="#3d4654"/></svg><svg style="position:absolute;left:74px;top:602px" width="8" height="9" viewBox="0 0 8 9"><path d="M2 0.5 L6.5 4.5 L2 8.5Z" fill="#3d4654"/></svg><svg style="position:absolute;left:88px;top:602px" width="10" height="9" viewBox="0 0 10 9"><path d="M2 0.5 L6.5 4.5 L2 8.5Z" fill="#3d4654"/><rect x="7.4" y="0.5" width="1.6" height="8" fill="#3d4654"/></svg><svg style="position:absolute;left:100px;top:598px" width="380" height="17" viewBox="0 0 380 17">
<path d="M135 16 L149 1 H218 L204 16Z" fill="#e3e8ef"/>
<path d="M204 16 L218 1 H282 L269 16Z" fill="#e3e8ef"/>
<path d="M269 16 L282 1 H340 L326 16Z" fill="#e3e8ef"/>
<path d="M326 16 L340 1 H373 L359 16Z" fill="#e3e8ef"/>
<path d="M204 16 L218 1 M269 16 L282 1 M326 16 L340 1 M359 16 L373 1" stroke="#9ba6b3" fill="none"/>
<path d="M1.5 0 V16.5 H135.5 L149.5 1.5 V0Z" fill="#fff"/>
<path d="M1.5 0 V16.5 H135.5 L149.5 1.5 V0" fill="none" stroke="#9aa5b2"/>
<path d="M135 16.5 H380" stroke="#9aa2ac"/>
</svg><div class="t" style="left:112px;top:600.66px;font-size:12.8px;color:#1e2a3a;font-weight:bold;">Продукты питания</div><div class="t" style="left:252px;top:601.68px;font-size:11.6px;color:#3d4856;font-weight:normal;">Таблица</div><div class="t" style="left:318px;top:601.51px;font-size:11.8px;color:#3d4856;font-weight:normal;">Рассчет</div><div class="t" style="left:384px;top:601.60px;font-size:11.7px;color:#3d4856;font-weight:normal;">Вывод</div><svg style="position:absolute;left:440px;top:600px" width="17" height="15" viewBox="0 0 17 15">
<path d="M4 6 Q4 4.5 5.5 4.5 H15 Q16 4.5 16 5.5 V11 Q16 12.5 14.5 12.5 H6 Q4 12.5 4 11Z" fill="#e4eef9" stroke="#3f6aa8"/>
<path d="M7 12.5 V14 H12 V12.5" fill="none" stroke="#3f6aa8" stroke-width="0.8"/>
<path d="M4.5 1 V8 M1 4.5 H8 M2 2 L7 7 M7 2 L2 7" stroke="#f29a18" stroke-width="1.2"/><circle cx="4.5" cy="4.5" r="1.6" fill="#ffd050"/></svg><div style="left:503px;top:600px;width:7px;height:15px;background:#fff;border:1.5px solid #7d7072"></div><div style="left:506px;top:603px;width:1px;height:8px;background:#7d7072"></div><svg style="position:absolute;left:514px;top:603px" width="7" height="9" viewBox="0 0 7 9"><path d="M6.5 0.5 L1 4.5 L6.5 8.5Z" fill="#3d4654"/></svg><div style="left:528px;top:600px;width:191px;height:14px;background:linear-gradient(#f3f6fa,#e2e7ee 60%,#d8dde5);border:1px solid #a5adb8;border-radius:2px"></div><div style="left:619px;top:604px;width:1px;height:6px;background:#6e6062"></div><div style="left:622px;top:604px;width:1px;height:6px;background:#6e6062"></div><div style="left:625px;top:604px;width:1px;height:6px;background:#6e6062"></div><div style="left:628px;top:604px;width:1px;height:6px;background:#6e6062"></div><svg style="position:absolute;left:790px;top:603px" width="7" height="9" viewBox="0 0 7 9"><path d="M0.5 0.5 L6 4.5 L0.5 8.5Z" fill="#3d4654"/></svg><div style="left:802px;top:600px;width:8px;height:15px;background:#fff;border:1.5px solid #7d7072"></div><div style="left:805px;top:603px;width:1px;height:8px;background:#7d7072"></div><div style="left:40px;top:615px;width:786px;height:23px;background:linear-gradient(#eef1f5,#dfe3e9 50%,#d3d8df);border-top:1px solid #f4f6f9;border-bottom:1px solid #8e98a4"></div><div class="t" style="left:48.5px;top:619.84px;font-size:12px;color:#2a3240;font-weight:normal;">Готово</div><div style="left:94px;top:617px;width:1px;height:19px;background:#a9a2a8;box-shadow:1px 0 0 #fff"></div><svg style="position:absolute;left:104px;top:618px" width="16" height="14" viewBox="0 0 16 14">
<rect x="1.5" y="1.5" width="14" height="12" fill="#fff" stroke="#6a8ab8"/><rect x="2" y="2" width="13" height="2.5" fill="#4a86d0"/>
<path d="M3 6.5 H7 M9 6.5 H14 M3 8.5 H7 M9 8.5 H14 M3 10.5 H7 M9 10.5 H14" stroke="#5a8ac8" stroke-width="1"/>
<circle cx="3.5" cy="3.5" r="3" fill="#d86030"/><circle cx="3" cy="2.8" r="1.2" fill="#f8b080"/></svg><div style="left:129px;top:617px;width:1px;height:19px;background:#a9a2a8;box-shadow:1px 0 0 #fff"></div><div class="t" style="left:302px;top:621.77px;font-size:10.9px;color:#2a3240;font-weight:normal;">Среднее: 17500</div><div class="t" style="left:399px;top:621.43px;font-size:11.3px;color:#2a3240;font-weight:normal;">Количество: 2</div><div class="t" style="left:489px;top:621.77px;font-size:10.9px;color:#2a3240;font-weight:normal;">Сумма: 35000</div><div style="left:569px;top:617px;width:1px;height:19px;background:#a9a2a8;box-shadow:1px 0 0 #fff"></div><div style="left:574px;top:617px;width:19px;height:19px;background:linear-gradient(#fde7a6,#fbd36b);border:1px solid #e3a03c;border-radius:2px"></div><svg style="position:absolute;left:577px;top:620px" width="13" height="12" viewBox="0 0 13 12"><rect x="0.5" y="0.5" width="12" height="11" fill="#fff" stroke="#4a5462"/>
<path d="M0.5 3.5 H12.5 M0.5 6.5 H12.5 M0.5 9 H12.5 M4.5 0.5 V11.5 M8.5 0.5 V11.5" stroke="#4a5462"/></svg><svg style="position:absolute;left:596px;top:620px" width="13" height="12" viewBox="0 0 13 12"><rect x="0.5" y="0.5" width="12" height="11" fill="#e8ecf0" stroke="#4a5462"/>
<rect x="3.5" y="2.5" width="6" height="7" fill="#fff" stroke="#4a5462"/></svg><svg style="position:absolute;left:614px;top:620px" width="13" height="12" viewBox="0 0 13 12"><rect x="0.5" y="0.5" width="12" height="11" fill="#fff" stroke="#4a5462"/>
<rect x="1" y="6" width="11" height="5" fill="#8a94a0"/><path d="M4.5 0.5 V7 M8.5 0.5 V7" stroke="#4a5462"/></svg><div class="t" style="left:640px;top:622.03px;font-size:10.6px;color:#2a3240;font-weight:normal;">100%</div><svg style="position:absolute;left:675px;top:617px" width="134" height="18" viewBox="0 0 134 18">
<line x1="16" y1="9" x2="116" y2="9" stroke="#8e959e" stroke-width="1"/><line x1="16" y1="10" x2="116" y2="10" stroke="#fff" stroke-width="1"/>
<circle cx="8.5" cy="9" r="7.5" fill="url(#zg)" stroke="#8a8c90"/><rect x="4.5" y="8" width="8" height="2.2" fill="#3d4654"/>
<circle cx="124" cy="9" r="7.5" fill="url(#zg)" stroke="#8a8c90"/><rect x="120" y="8" width="8" height="2.2" fill="#3d4654"/><rect x="123" y="5" width="2.2" height="8" fill="#3d4654"/>
<path d="M62 2 L70 2 L70 8.5 L66 12.5 L62 8.5Z" fill="#fafbfc" stroke="#6a7078"/>
<defs><linearGradient id="zg" x1="0" y1="0" x2="0" y2="1"><stop offset="0" stop-color="#fff"/><stop offset="1" stop-color="#dfe3e8"/></linearGradient></defs>
</svg><div style="left:823px;top:626px;width:2px;height:2px;background:#a0a6ae;box-shadow:1px 1px 0 #fff"></div><div style="left:819px;top:630px;width:2px;height:2px;background:#a0a6ae;box-shadow:1px 1px 0 #fff"></div><div style="left:823px;top:630px;width:2px;height:2px;background:#a0a6ae;box-shadow:1px 1px 0 #fff"></div><div style="left:815px;top:634px;width:2px;height:2px;background:#a0a6ae;box-shadow:1px 1px 0 #fff"></div><div style="left:819px;top:634px;width:2px;height:2px;background:#a0a6ae;box-shadow:1px 1px 0 #fff"></div><div style="left:823px;top:634px;width:2px;height:2px;background:#a0a6ae;box-shadow:1px 1px 0 #fff"></div><svg style="position:absolute;left:60px;top:87px" width="30" height="34" viewBox="0 0 30 34">
<defs><linearGradient id="cb" x1="0" y1="0" x2="1" y2="1"><stop offset="0" stop-color="#fbd27a"/><stop offset="1" stop-color="#f3b04a"/></linearGradient>
<linearGradient id="pg" x1="0" y1="0" x2="1" y2="1"><stop offset="0" stop-color="#ffffff"/><stop offset="1" stop-color="#e4e9ef"/></linearGradient></defs>
<rect x="2.5" y="4.5" width="23" height="24" rx="1" fill="url(#cb)" stroke="#d99a4a"/>
<path d="M7.5 8.5 L7.5 6 L11 6 L11.5 3 Q14 1 16.5 3 L17 6 L20.5 6 L20.5 8.5Z" fill="#f4f6f8" stroke="#5a6470"/>
<circle cx="14" cy="4.2" r="0.9" fill="#b0502a"/>
<path d="M10.5 13.5 L23 13.5 L27.5 18 L27.5 31.5 L10.5 31.5Z" fill="url(#pg)" stroke="#6a7280"/>
<path d="M23 13.5 L23 18 L27.5 18" fill="#dde3ea" stroke="#6a7280"/>
<path d="M13 16.5 H21 M13 18.5 H21 M13 20.5 H20 M13 22.5 H25 M13 24.5 H25 M13 26.5 H25 M13 28.5 H25" stroke="#b9c1cc" stroke-width="0.9"/>
</svg><div class="t" style="left:51px;top:125.60px;font-size:11.1px;color:#2a3442;font-weight:normal;">Вставить</div><svg style="position:absolute;left:72px;top:141px" width="6" height="4" viewBox="0 0 6 4"><path d="M0 0 H6 L3 3.5Z" fill="#5a6470"/></svg><svg style="position:absolute;left:105px;top:89px" width="13" height="16" viewBox="0 0 13 16">
<path d="M3 1 L7 9 M10 1 L6 9" stroke="#6d7480" stroke-width="1.6"/>
<circle cx="4.2" cy="11.6" r="2.6" fill="none" stroke="#2f6ad0" stroke-width="1.8"/>
<circle cx="8.8" cy="11.3" r="2.6" fill="none" stroke="#2f6ad0" stroke-width="1.8"/>
</svg><svg style="position:absolute;left:103px;top:111px" width="28" height="15" viewBox="0 0 28 15">
<path d="M1.5 1.5 L7 1.5 L9 3.5 L9 10.5 L1.5 10.5Z" fill="#fafcff" stroke="#6a7280"/>
<path d="M3 5 H7 M3 7 H7" stroke="#5b9be0" stroke-width="1"/>
<path d="M7.5 4.5 L13 4.5 L15.5 7 L15.5 14.5 L7.5 14.5Z" fill="#f5f8fd" stroke="#2b55a8"/>
<path d="M9 9 H14 M9 11.5 H14" stroke="#3a7be0" stroke-width="1.3"/>
<path d="M21 6 H26 L23.5 9Z" fill="#5a6470"/>
</svg><svg style="position:absolute;left:103px;top:132px" width="19" height="17" viewBox="0 0 19 17">
<path d="M1.5 9 Q4 5.5 8 6.5 L12 10.5 Q11 14 7 15.5 Q3 13 1.5 9Z" fill="#f8d890" stroke="#d9a050" stroke-width="0.8"/>
<path d="M5 11 L9 14.5 L12 10.5 L8 6.5Z" fill="#f0b040"/>
<path d="M8 6.5 L11 3.5 L15 7.5 L12 10.5Z" fill="#d8dde4" stroke="#5a6470" stroke-width="0.8"/>
<path d="M12 4.5 L15.5 1.5 Q17.5 1.2 17.5 3 L14.5 6.5Z" fill="#2f6ad0" stroke="#1e4c9e" stroke-width="0.6"/>
</svg><svg style="position:absolute;left:129px;top:158px" width="8" height="8" viewBox="0 0 8 8"><path d="M0.5 0.5 H7.5 V7.5" fill="none" stroke="#9aa3ae"/><path d="M2 2 L6 6 M3.5 6 H6 V3.5" stroke="#7a828c" fill="none"/></svg><div style="left:148px;top:86px;width:91px;height:22px;background:#fff;border:1px solid #c5ccd5"></div><div style="left:238px;top:86px;width:44px;height:22px;background:#fff;border:1px solid #c5ccd5"></div><div class="t" style="left:151px;top:91.68px;font-size:11.6px;color:#1a1a1a;font-weight:normal;">Calibri</div><div class="t" style="left:241px;top:91.68px;font-size:11.6px;color:#1a1a1a;font-weight:normal;">11</div><svg style="position:absolute;left:229px;top:95px" width="5" height="3" viewBox="0 0 5 3"><path d="M0 0 H5 L2.5 3Z" fill="#5a6470"/></svg><svg style="position:absolute;left:272px;top:95px" width="5" height="3" viewBox="0 0 5 3"><path d="M0 0 H5 L2.5 3Z" fill="#5a6470"/></svg><div class="t" style="left:153px;top:111.07px;font-size:13.5px;color:#1a1a1a;font-weight:bold;font-family:'Liberation Serif'">Ж</div><div class="t" style="left:177px;top:111.07px;font-size:13.5px;color:#1a1a1a;font-weight:bold;font-family:'Liberation Serif'"><i>К</i></div><div class="t" style="left:201px;top:111.07px;font-size:13.5px;color:#1a1a1a;font-weight:bold;font-family:'Liberation Serif'">Ч</div><div style="left:201px;top:124px;width:10px;height:1px;background:#1a1a1a"></div><svg style="position:absolute;left:219px;top:117px" width="6" height="4" viewBox="0 0 6 4"><path d="M0 0 H6 L3 3Z" fill="#5a6470"/></svg><div style="left:232px;top:110px;width:1px;height:18px;background:#d6dde6;box-shadow:1px 0 0 #fff"></div><div class="t" style="left:241px;top:112.30px;font-size:15px;color:#1f4f2f;font-weight:bold;font-family:'Liberation Serif'">A</div><svg style="position:absolute;left:251px;top:112px" width="6" height="4" viewBox="0 0 6 4"><path d="M0 3.5 H6 L3 0Z" fill="#2f5fb0"/></svg><div class="t" style="left:264.5px;top:116.11px;font-size:10.5px;color:#1f2f2f;font-weight:bold;font-family:'Liberation Serif'">A</div><svg style="position:absolute;left:271px;top:112px" width="6" height="4" viewBox="0 0 6 4"><path d="M0 0 H6 L3 3.5Z" fill="#2f5fb0"/></svg><svg style="position:absolute;left:153px;top:134px" width="15" height="15" viewBox="0 0 15 15">
<path d="M1.5 1 V12 M13.5 1 V12 M7.5 1 V12 M1 1.5 H14 M1 7.5 H14" stroke="#555" stroke-width="1" stroke-dasharray="1 1" fill="none"/>
<rect x="1" y="12.6" width="13" height="1.4" fill="#111"/></svg><svg style="position:absolute;left:174px;top:139px" width="6" height="4" viewBox="0 0 6 4"><path d="M0 0 H6 L3 3Z" fill="#5a6470"/></svg><div style="left:187px;top:133px;width:1px;height:18px;background:#d6dde6;box-shadow:1px 0 0 #fff"></div><svg style="position:absolute;left:196px;top:131px" width="17" height="18" viewBox="0 0 17 18">
<defs><linearGradient id="bk" x1="0" y1="0" x2="1" y2="1"><stop offset="0" stop-color="#ffffff"/><stop offset=".6" stop-color="#c8d4e2"/><stop offset="1" stop-color="#7f93ad"/></linearGradient></defs>
<path d="M2 7.5 L8 2.5 L14 8.5 L8.5 13.5Z" fill="url(#bk)" stroke="#3c4c62" stroke-width="1"/>
<path d="M5.5 4.5 Q7 0.5 10 3" fill="none" stroke="#5a6678" stroke-width="1"/>
<circle cx="9" cy="6" r="1.1" fill="#6a7688"/><path d="M9 6 V9" stroke="#6a7688" stroke-width="0.8"/>
<path d="M11.5 4 Q15.5 4.5 15.5 9 Q15 11 14 10 L13.5 7.5Z" fill="#3f76c8"/>
<rect x="0" y="14" width="16" height="3.3" fill="#8dd04e"/></svg><svg style="position:absolute;left:217px;top:139px" width="6" height="4" viewBox="0 0 6 4"><path d="M0 0 H6 L3 3Z" fill="#5a6470"/></svg><div class="t" style="left:231.5px;top:130.80px;font-size:15px;color:#2a4f9e;font-weight:bold;font-family:'Liberation Serif'">A</div><div style="left:229px;top:145px;width:16px;height:3px;background:#000"></div><svg style="position:absolute;left:250px;top:139px" width="6" height="4" viewBox="0 0 6 4"><path d="M0 0 H6 L3 3Z" fill="#5a6470"/></svg><svg style="position:absolute;left:273px;top:158px" width="8" height="8" viewBox="0 0 8 8"><path d="M0.5 0.5 H7.5 V7.5" fill="none" stroke="#9aa3ae"/><path d="M2 2 L6 6 M3.5 6 H6 V3.5" stroke="#7a828c" fill="none"/></svg><svg style="position:absolute;left:296px;top:89px" width="16" height="14" viewBox="0 0 16 14"><rect x="0" y="0.5" width="14" height="1.5" fill="#111"/><rect x="0" y="3.5" width="14" height="1.5" fill="#111"/><rect x="1" y="6.5" width="12" height="1.5" fill="#111"/></svg><svg style="position:absolute;left:319px;top:93px" width="16" height="14" viewBox="0 0 16 14"><rect x="0" y="0.5" width="14" height="1.5" fill="#111"/><rect x="0" y="3.5" width="14" height="1.5" fill="#111"/><rect x="1" y="6.5" width="12" height="1.5" fill="#111"/></svg><div style="left:338px;top:86px;width:22px;height:22px;background:linear-gradient(#fde9a8,#fcd978 50%,#fbd264);border:1px solid #e0a04a;border-radius:3px"></div><svg style="position:absolute;left:342px;top:96px" width="16" height="14" viewBox="0 0 16 14"><rect x="0" y="0.5" width="14" height="1.5" fill="#111"/><rect x="0" y="3.5" width="14" height="1.5" fill="#111"/><rect x="1" y="6.5" width="12" height="1.5" fill="#111"/></svg><svg style="position:absolute;left:365px;top:88px" width="18" height="17" viewBox="0 0 18 17">
<rect x="1.5" y="1.5" width="11" height="4" fill="#f2f6fb" stroke="#5a6a80"/><path d="M3 3.5 H17" stroke="#b8603a" stroke-width="1"/>
<rect x="1.5" y="8.5" width="11" height="7" fill="#e9f0f9" stroke="#5a6a80"/><path d="M3 10.5 H10 M3 13 H10" stroke="#b8603a"/>
<path d="M16.5 6.5 V10.5 H13.5 M15 9 L13.5 10.5 L15 12" stroke="#2f5fb0" stroke-width="1.1" fill="none"/></svg><svg style="position:absolute;left:296px;top:113px" width="16" height="14" viewBox="0 0 16 14"><rect x="0" y="0" width="14" height="1.2" fill="#111"/><rect x="0" y="2" width="10" height="1.2" fill="#111"/><rect x="0" y="4" width="14" height="1.2" fill="#111"/><rect x="0" y="6" width="10" height="1.2" fill="#111"/><rect x="0" y="8" width="14" height="1.2" fill="#111"/><rect x="0" y="10" width="10" height="1.2" fill="#111"/></svg><svg style="position:absolute;left:319px;top:113px" width="16" height="14" viewBox="0 0 16 14"><rect x="0" y="0" width="14" height="1.2" fill="#111"/><rect x="2" y="2" width="10" height="1.2" fill="#111"/><rect x="0" y="4" width="14" height="1.2" fill="#111"/><rect x="2" y="6" width="10" height="1.2" fill="#111"/><rect x="0" y="8" width="14" height="1.2" fill="#111"/><rect x="2" y="10" width="10" height="1.2" fill="#111"/></svg><svg style="position:absolute;left:342px;top:113px" width="16" height="14" viewBox="0 0 16 14"><rect x="0" y="0" width="14" height="1.2" fill="#111"/><rect x="4" y="2" width="10" height="1.2" fill="#111"/><rect x="0" y="4" width="14" height="1.2" fill="#111"/><rect x="4" y="6" width="10" height="1.2" fill="#111"/><rect x="0" y="8" width="14" height="1.2" fill="#111"/><rect x="4" y="10" width="10" height="1.2" fill="#111"/></svg><svg style="position:absolute;left:366px;top:111px" width="16" height="15" viewBox="0 0 16 15">
<rect x="0.5" y="0.5" width="15" height="14" fill="#d8e6f6" stroke="#4d6a92"/>
<path d="M0.5 3.5 H15.5 M0.5 11.5 H15.5 M8 0.5 V3.5 M8 11.5 V14.5" stroke="#4d6a92"/>
<rect x="1" y="4" width="14" height="7" fill="#fff"/>
<text x="8" y="10.5" font-family="Liberation Serif" font-size="9" font-weight="bold" fill="#1e3a1e" text-anchor="middle">a</text>
<path d="M1.5 7.5 H4.5 M11.5 7.5 H14.5 M2.5 6.5 L1.5 7.5 L2.5 8.5 M13.5 6.5 L14.5 7.5 L13.5 8.5" stroke="#2a4a2a" fill="none" stroke-width="0.8"/></svg><svg style="position:absolute;left:386px;top:117px" width="6" height="4" viewBox="0 0 6 4"><path d="M0 0 H6 L3 3Z" fill="#5a6470"/></svg><svg style="position:absolute;left:294px;top:132px" width="18" height="16" viewBox="0 0 18 16">
<rect x="7" y="0.5" width="1" height="1" fill="#111"/><rect x="7" y="14.5" width="1" height="1" fill="#111"/>
<rect x="2" y="2.2" width="3" height="1.1" fill="#111"/><rect x="7" y="2.2" width="9" height="1.1" fill="#111"/>
<rect x="7" y="4.2" width="9" height="2" fill="#111"/><rect x="7" y="7.2" width="6" height="2" fill="#111"/>
<rect x="2" y="10.2" width="3" height="1.1" fill="#111"/><rect x="7" y="10.2" width="9" height="1.1" fill="#111"/>
<rect x="2" y="12.2" width="3" height="1.1" fill="#111"/><rect x="7" y="12.2" width="1" height="1.1" fill="#111"/>
<path d="M0.5 6.8 L4 4.5 L3.2 6.2 H6 V7.4 H3.2 L4 9.1Z" fill="#2f6ad0"/></svg><svg style="position:absolute;left:317px;top:132px" width="18" height="16" viewBox="0 0 18 16">
<rect x="5" y="0.5" width="1" height="1" fill="#111"/><rect x="5" y="14.5" width="1" height="1" fill="#111"/>
<rect x="0" y="2.2" width="3" height="1.1" fill="#111"/><rect x="5" y="2.2" width="10" height="1.1" fill="#111"/>
<rect x="5" y="4.2" width="10" height="2" fill="#111"/><rect x="5" y="7.2" width="6" height="2" fill="#111"/>
<rect x="0" y="10.2" width="3" height="1.1" fill="#111"/><rect x="5" y="10.2" width="10" height="1.1" fill="#111"/>
<rect x="0" y="12.2" width="3" height="1.1" fill="#111"/><rect x="5" y="12.2" width="1" height="1.1" fill="#111"/>
<path d="M5 6.8 L1.5 4.5 L2.3 6.2 H0 V7.4 H2.3 L1.5 9.1Z" fill="#2f6ad0"/></svg><div style="left:339px;top:130px;width:1px;height:20px;background:#d6dde6;box-shadow:1px 0 0 #fff"></div><svg style="position:absolute;left:349px;top:133px" width="17" height="16" viewBox="0 0 17 16">
<g transform="rotate(-45 6 8)"><text x="6" y="11" font-family="Liberation Sans" font-size="9.5" font-weight="bold" fill="#222" text-anchor="middle">ab</text></g>
<path d="M5 14.5 L15 4.5 M12 4.5 H15 V7.5" stroke="#333" stroke-width="0.9" fill="none"/></svg><svg style="position:absolute;left:367px;top:139px" width="6" height="4" viewBox="0 0 6 4"><path d="M0 0 H6 L3 3Z" fill="#5a6470"/></svg><svg style="position:absolute;left:385px;top:158px" width="8" height="8" viewBox="0 0 8 8"><path d="M0.5 0.5 H7.5 V7.5" fill="none" stroke="#9aa3ae"/><path d="M2 2 L6 6 M3.5 6 H6 V3.5" stroke="#7a828c" fill="none"/></svg><div style="left:404px;top:86px;width:81px;height:22px;background:#fff;border:1px solid #c5ccd5"></div><div class="t" style="left:407.5px;top:91.77px;font-size:11.5px;color:#1a1a1a;font-weight:normal;">Общий</div><svg style="position:absolute;left:474px;top:95px" width="5" height="3" viewBox="0 0 5 3"><path d="M0 0 H5 L2.5 3Z" fill="#5a6470"/></svg><svg style="position:absolute;left:408px;top:111px" width="17" height="17" viewBox="0 0 17 17">
<rect x="0" y="0" width="16" height="9" fill="#2f62c0"/><ellipse cx="8" cy="4.5" rx="6" ry="3.3" fill="#cfe0f6"/><ellipse cx="8" cy="4.5" rx="3" ry="2.3" fill="#5a86d0"/>
<ellipse cx="12" cy="8" rx="3" ry="1.3" fill="#f6c650" stroke="#b07a10" stroke-width="0.5"/>
<ellipse cx="12" cy="10.5" rx="3" ry="1.3" fill="#f6c650" stroke="#b07a10" stroke-width="0.5"/>
<ellipse cx="12" cy="13" rx="3" ry="1.3" fill="#f6c650" stroke="#b07a10" stroke-width="0.5"/>
<ellipse cx="11" cy="15.3" rx="3" ry="1.3" fill="#f6c650" stroke="#b07a10" stroke-width="0.5"/>
<ellipse cx="4" cy="12.5" rx="3" ry="1.3" fill="#f6c650" stroke="#b07a10" stroke-width="0.5"/></svg><svg style="position:absolute;left:429px;top:117px" width="6" height="4" viewBox="0 0 6 4"><path d="M0 0 H6 L3 3Z" fill="#5a6470"/></svg><div class="t" style="left:443.5px;top:113.13px;font-size:13.2px;color:#1a1a1a;font-weight:normal;">%</div><div class="t" style="left:465.5px;top:114.48px;font-size:11.6px;color:#1a2a1a;font-weight:normal;letter-spacing:-1.3px">000</div><svg style="position:absolute;left:407px;top:133px" width="40" height="17" viewBox="0 0 40 17">
<text x="8" y="7.3" font-family="Liberation Sans" font-size="9" font-weight="bold" fill="#111">,0</text>
<text x="3" y="15.3" font-family="Liberation Sans" font-size="9" font-weight="bold" fill="#111">,00</text>
<path d="M1 4.5 L4.5 2 L3.8 4 H7.5 V5 H3.8 L4.5 7Z" fill="#2f6ad0"/>
<text x="25" y="7.3" font-family="Liberation Sans" font-size="9" font-weight="bold" fill="#111">,00</text>
<text x="30" y="15.3" font-family="Liberation Sans" font-size="9" font-weight="bold" fill="#111">,0</text>
<path d="M30 12.5 L26.5 10 L27.2 12 H23.5 V13 H27.2 L26.5 15Z" fill="#2f6ad0"/></svg><svg style="position:absolute;left:474px;top:158px" width="8" height="8" viewBox="0 0 8 8"><path d="M0.5 0.5 H7.5 V7.5" fill="none" stroke="#9aa3ae"/><path d="M2 2 L6 6 M3.5 6 H6 V3.5" stroke="#7a828c" fill="none"/></svg><div style="left:495px;top:87px;width:31px;height:31px;background:linear-gradient(#ffffff,#f4f6f9);border:1px solid #c9cfd8;border-radius:3px"></div><svg style="position:absolute;left:500px;top:92px" width="22" height="20" viewBox="0 0 22 20">
<text x="3" y="18" font-family="Liberation Serif" font-size="19" font-style="italic" fill="#2f5fb8">A</text>
<path d="M8 18.5 Q12 17 16 12 L18.5 13.5 Q15 18.5 9 19Z" fill="#5a90d8"/>
<path d="M16 12 L20 7 L21 8 L18.5 13.5Z" fill="#f0b030"/></svg><div class="t" style="left:494.5px;top:123.68px;font-size:11.6px;color:#2a3442;font-weight:normal;">Стили</div><svg style="position:absolute;left:508px;top:140px" width="6" height="4" viewBox="0 0 6 4"><path d="M0 0 H6 L3 3.5Z" fill="#5a6470"/></svg><svg style="position:absolute;left:539px;top:89px" width="18" height="16" viewBox="0 0 18 16">
<rect x="1.5" y="1.5" width="6" height="3.5" fill="#e8f0fa" stroke="#4a5462"/>
<rect x="1.5" y="8.5" width="6" height="6.5" fill="#e8f0fa" stroke="#4a5462"/><path d="M1.5 11.5 H7.5" stroke="#4a5462"/>
<rect x="10.5" y="5.5" width="6.5" height="3" fill="#9ec0e8" stroke="#4a6a92"/>
<path d="M7 7 H10 M8 5.8 L7 7 L8 8.2" stroke="#111" stroke-width="1" fill="none"/></svg><div class="t" style="left:558.5px;top:91.93px;font-size:11.3px;color:#2a3442;font-weight:normal;">Вставить</div><svg style="position:absolute;left:611px;top:95px" width="6" height="4" viewBox="0 0 6 4"><path d="M0 0 H6 L3 3Z" fill="#5a6470"/></svg><svg style="position:absolute;left:539px;top:111px" width="17" height="15" viewBox="0 0 17 15">
<rect x="1.5" y="1.5" width="6" height="3.5" fill="#e8f0fa" stroke="#4a5462"/>
<rect x="1.5" y="7.5" width="6" height="6.5" fill="#e8f0fa" stroke="#4a5462"/><path d="M1.5 10.5 H7.5" stroke="#4a5462"/>
<rect x="6.5" y="5" width="6" height="3" fill="#9ec0e8" stroke="#4a6a92"/>
<path d="M10 1 L16 8 M16 1.5 L10 8.5" stroke="#e02020" stroke-width="1.6"/>
<path d="M9 2 L12 5" stroke="#f0a030" stroke-width="1"/></svg><div class="t" style="left:558.5px;top:113.43px;font-size:11.3px;color:#2a3442;font-weight:normal;">Удалить</div><svg style="position:absolute;left:606px;top:117px" width="6" height="4" viewBox="0 0 6 4"><path d="M0 0 H6 L3 3Z" fill="#5a6470"/></svg><svg style="position:absolute;left:539px;top:132px" width="18" height="17" viewBox="0 0 18 17">
<path d="M1.5 1.5 V3.5 M16.5 1.5 V3.5 M4 2.5 H14" stroke="#333" stroke-dasharray="1 1" fill="none"/>
<rect x="1.5" y="3.5" width="15" height="11" fill="#fff" stroke="#5a6470"/>
<path d="M1.5 7.5 H16.5 M1.5 11 H16.5 M6.5 3.5 V14.5 M11.5 3.5 V14.5" stroke="#8a94a0" fill="none"/>
<rect x="7" y="8" width="4" height="2.5" fill="#6a9ad8"/>
<path d="M1 14 L1 16 L5 16" stroke="#3a6ab0" fill="none" stroke-width="1.2"/></svg><div class="t" style="left:558.5px;top:134.51px;font-size:11.8px;color:#2a3442;font-weight:normal;">Формат</div><svg style="position:absolute;left:603px;top:139px" width="6" height="4" viewBox="0 0 6 4"><path d="M0 0 H6 L3 3Z" fill="#5a6470"/></svg><svg style="position:absolute;left:634px;top:91px" width="11" height="11" viewBox="0 0 11 11"><path d="M0.8 0.8 H10 V3 H9.2 Q9 1.8 8 1.8 H3.2 L6.6 5.5 L3 9.3 H8.2 Q9.3 9.3 9.5 8 H10.3 L10 10.3 H0.6 V9.8 L4.6 5.6 L0.8 1.4Z" fill="#111"/></svg><svg style="position:absolute;left:652px;top:95px" width="6" height="4" viewBox="0 0 6 4"><path d="M0 0 H6 L3 3Z" fill="#5a6470"/></svg><svg style="position:absolute;left:632px;top:110px" width="15" height="17" viewBox="0 0 15 17">
<rect x="0.5" y="0.5" width="14" height="16" fill="#dbe8f7" stroke="#50607a"/><rect x="1" y="1" width="13" height="2" fill="#4a86d6"/>
<path d="M5 4 H10 V9 H12.5 L7.5 14 L2.5 9 H5Z" fill="#3a7ee0" stroke="#1f56a8" stroke-width="0.7"/></svg><svg style="position:absolute;left:650px;top:117px" width="6" height="4" viewBox="0 0 6 4"><path d="M0 0 H6 L3 3Z" fill="#5a6470"/></svg><svg style="position:absolute;left:632px;top:134px" width="16" height="14" viewBox="0 0 16 14">
<path d="M1.5 9 L9 2 Q11 0.8 13 2.5 L14 3.5 Q15 5.5 13.5 7 L6 13 Q4 13.8 2.5 12.5 L1.2 11.2 Q0.8 10 1.5 9Z" fill="#f4f7fb" stroke="#3f5f8f"/>
<path d="M1.5 10 L6 13" stroke="#3a6ad0" stroke-width="1.5"/><path d="M7 13.3 H15" stroke="#222" stroke-width="1.2"/></svg><svg style="position:absolute;left:650px;top:139px" width="6" height="4" viewBox="0 0 6 4"><path d="M0 0 H6 L3 3Z" fill="#5a6470"/></svg><svg style="position:absolute;left:679px;top:89px" width="32" height="30" viewBox="0 0 32 30">
<defs><linearGradient id="fn" x1="0" y1="0" x2="1" y2="0"><stop offset="0" stop-color="#e8ebef"/><stop offset=".5" stop-color="#9aa2ac"/><stop offset="1" stop-color="#6a727c"/></linearGradient></defs>
<path d="M12 6 H31 L22 14 V27 H18 V14Z" fill="url(#fn)" stroke="#7a828c" stroke-width="0.6"/>
<text x="2" y="13" font-family="Liberation Serif" font-size="14" fill="#2a5cb8" font-weight="bold">A</text>
<text x="1" y="28.5" font-family="Liberation Serif" font-size="15" fill="#8a4a20" font-weight="bold">Я</text></svg><div class="t" style="left:663px;top:124.93px;font-size:11.9px;color:#2a3442;font-weight:normal;">Сортировка</div><div class="t" style="left:666.5px;top:138.31px;font-size:11.8px;color:#2a3442;font-weight:normal;">и фильтр</div><svg style="position:absolute;left:719px;top:143px" width="6" height="4" viewBox="0 0 6 4"><path d="M0 0 H6 L3 3Z" fill="#5a6470"/></svg><svg style="position:absolute;left:746px;top:91px" width="29" height="26" viewBox="0 0 29 26">
<defs><linearGradient id="bn" x1="0" y1="0" x2="1" y2="0"><stop offset="0" stop-color="#3a5a9a"/><stop offset=".35" stop-color="#c8d8ee"/><stop offset="1" stop-color="#2a4a8a"/></linearGradient></defs>
<rect x="6" y="1" width="5" height="4" rx="1.5" fill="url(#bn)" stroke="#2a3a6a" stroke-width="0.6"/>
<rect x="17" y="1" width="5" height="4" rx="1.5" fill="url(#bn)" stroke="#2a3a6a" stroke-width="0.6"/>
<rect x="4" y="5" width="10" height="8" rx="2" fill="url(#bn)" stroke="#2a3a6a" stroke-width="0.6"/>
<rect x="15" y="5" width="10" height="8" rx="2" fill="url(#bn)" stroke="#2a3a6a" stroke-width="0.6"/>
<rect x="12" y="9" width="5" height="5" fill="#2a3a6a"/>
<rect x="0.5" y="12" width="12" height="13" rx="2" fill="url(#bn)" stroke="#1f2f5f" stroke-width="0.8"/>
<rect x="16.5" y="12" width="12" height="13" rx="2" fill="url(#bn)" stroke="#1f2f5f" stroke-width="0.8"/></svg><div class="t" style="left:740px;top:124.84px;font-size:12px;color:#2a3442;font-weight:normal;">Найти и</div><div class="t" style="left:733px;top:138.40px;font-size:11.7px;color:#2a3442;font-weight:normal;">выделить</div><svg style="position:absolute;left:786px;top:143px" width="6" height="4" viewBox="0 0 6 4"><path d="M0 0 H6 L3 3Z" fill="#5a6470"/></svg><svg style="position:absolute;left:50px;top:203px" width="13" height="12" viewBox="0 0 13 12"><path d="M12 0.5 V11.5 H1Z" fill="#c4c9d1"/></svg>
</body></html>
